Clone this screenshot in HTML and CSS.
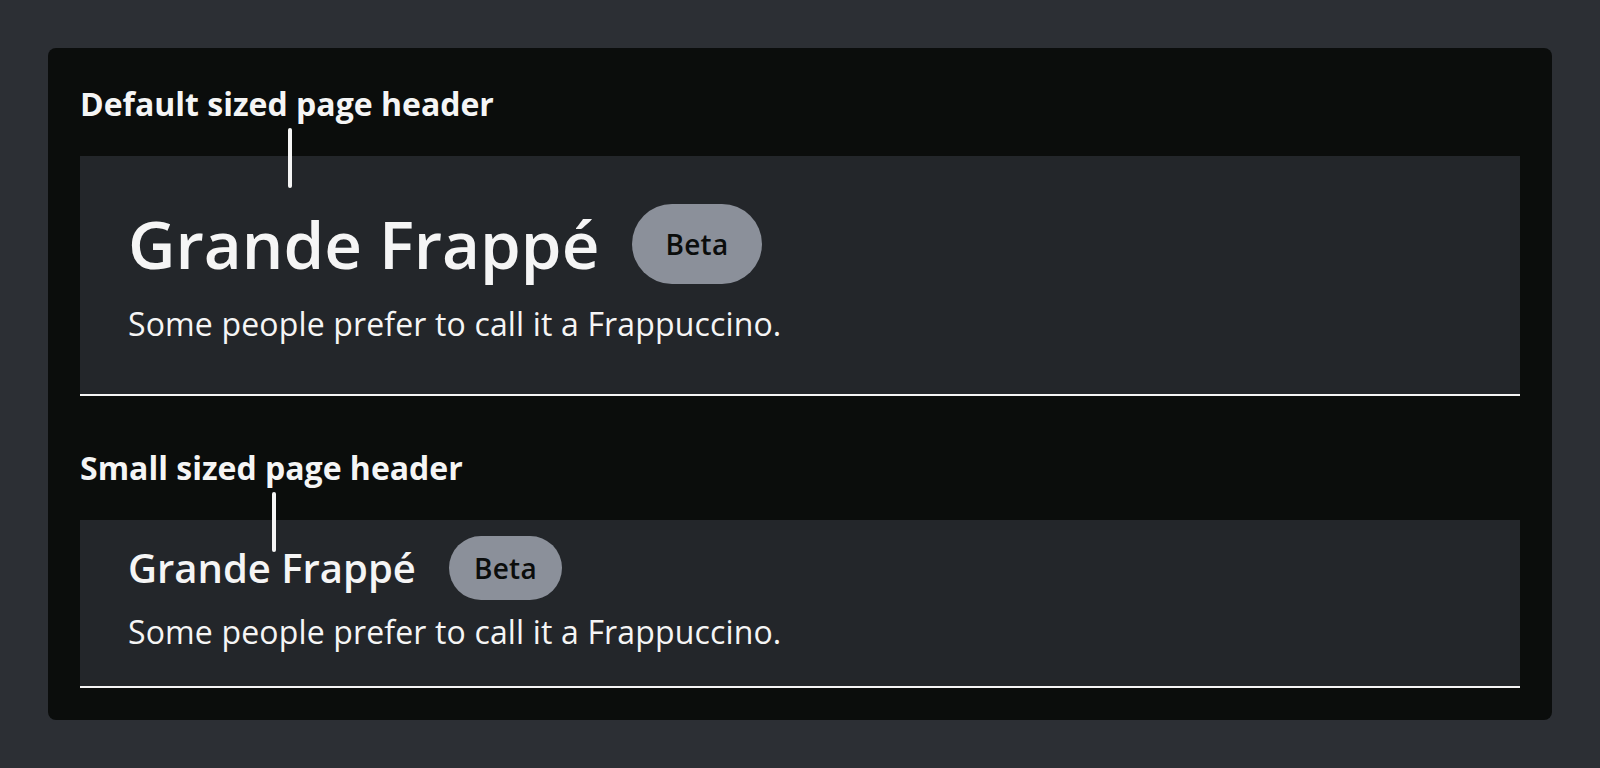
FILE: index.html
```html
<!DOCTYPE html>
<html lang="en">
<head>
<meta charset="utf-8">
<title>Page headers</title>
<link rel="stylesheet" href="styles.css">
</head>
<body>
<main class="board">
  <section class="example">
    <div class="label-row"><span class="label">Default sized page header</span></div>
    <header class="page-header page-header--default">
      <div class="title-row">
        <h1 class="title">Grande Frappé</h1>
        <span class="badge">Beta</span>
      </div>
      <p class="subtitle">Some people prefer to call it a Frappuccino.</p>
    </header>
  </section>
  <section class="example">
    <div class="label-row"><span class="label">Small sized page header</span></div>
    <header class="page-header page-header--small">
      <div class="title-row">
        <h1 class="title">Grande Frappé</h1>
        <span class="badge">Beta</span>
      </div>
      <p class="subtitle">Some people prefer to call it a Frappuccino.</p>
    </header>
  </section>
</main>
</body>
</html>
```

FILE: styles.css
```css
html, body {
  margin: 0;
  padding: 0;
  background: #2c2f34;
}
body {
  padding: 48px;
  font-family: "Open Sans", "Noto Sans", sans-serif;
  color: #f5f5f5;
}
.board {
  background: #0b0d0c;
  border-radius: 8px;
  padding: 32px;
  display: flex;
  flex-direction: column;
  gap: 48px;
}
.example {
  display: flex;
  flex-direction: column;
  gap: 28px;
}
.label-row {
  display: flex;
}
.label {
  position: relative;
  font-size: 32px;
  line-height: 48px;
  font-weight: 700;
  color: #f5f5f5;
}
.label::after {
  content: "";
  position: absolute;
  left: 50%;
  top: 100%;
  width: 4px;
  height: 60px;
  margin-left: 1px;
  border-radius: 2px;
  background: #f5f5f5;
  z-index: 2;
}
.page-header {
  background: #23262a;
  border-bottom: 2px solid #f5f5f5;
  padding: 48px 48px 46px;
  display: flex;
  flex-direction: column;
  gap: 16px;
}
.page-header--small {
  padding: 16px 48px 30px;
  gap: 8px;
}
.title-row {
  display: flex;
  align-items: center;
  gap: 33px;
}
.title {
  margin: 0;
  font-weight: 600;
  font-size: 65.5px;
  line-height: 80px;
  color: #f5f5f5;
}
.page-header--small .title {
  font-size: 40px;
  line-height: 64px;
}
.badge {
  display: inline-flex;
  align-items: center;
  justify-content: center;
  height: 80px;
  padding: 0 33px;
  border-radius: 40px;
  background: #8b909a;
  color: #0b0d0c;
  font-size: 28px;
  font-weight: 600;
  letter-spacing: 0.3px;
}
.page-header--small .badge {
  height: 64px;
  padding: 0 25px;
  border-radius: 32px;
}
.subtitle {
  margin: 0;
  font-size: 32px;
  line-height: 48px;
  font-weight: 400;
  letter-spacing: 0.15px;
  color: #f5f5f5;
}
```
